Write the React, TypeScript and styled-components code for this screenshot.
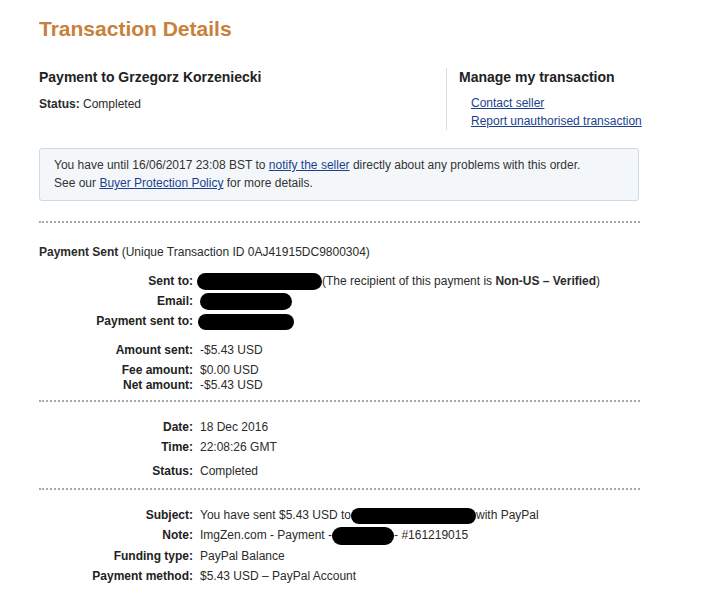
import React from "react";
import styled, { createGlobalStyle } from "styled-components";

const GlobalStyle = createGlobalStyle`
  html, body { margin: 0; padding: 0; background: #ffffff; }
  body {
    font-family: "Liberation Sans", Arial, sans-serif;
    font-size: 12px;
    color: #2b2b2b;
  }
`;

const Page = styled.div`
  width: 602px;
  padding: 17px 0 0 39px;
`;

const Title = styled.h1`
  margin: 0;
  font-size: 21px;
  line-height: 24px;
  font-weight: bold;
  color: #c8813d;
`;

const Header = styled.div`
  display: flex;
  margin-top: 27px;
`;

const Summary = styled.div`
  width: 407px;
  flex: none;
`;

const Manage = styled.div`
  flex: none;
  border-left: 1px solid #dcdcdc;
  padding-left: 12px;
  white-space: nowrap;
`;

const Heading = styled.h2`
  margin: 0;
  font-size: 14px;
  line-height: 18px;
  font-weight: bold;
  color: #222;
`;

const StatusLine = styled.div`
  margin-top: 9px;
  line-height: 18px;
`;

const LinkList = styled.div`
  display: flex;
  flex-direction: column;
  align-items: flex-start;
  padding: 8px 0 0 12px;
`;

const Link = styled.a`
  color: #1d3f8f;
  text-decoration: underline;
  line-height: 18px;
  cursor: pointer;
`;

const Notice = styled.div`
  margin-top: 18px;
  width: 570px;
  padding: 7px 14px 8px 14px;
  line-height: 18px;
  background: #f3f7fa;
  border: 1px solid #c9dbe7;
  border-radius: 3px;
  color: #333;
`;

const Divider = styled.div<{ $top: number }>`
  margin-top: ${(p) => p.$top}px;
  width: 601px;
  border-top: 2px dotted #a9a9a9;
`;

const Intro = styled.div<{ $top: number }>`
  margin-top: ${(p) => p.$top}px;
  line-height: 15px;
`;

const Row = styled.div<{ $top: number }>`
  display: grid;
  grid-template-columns: 154px 1fr;
  column-gap: 7px;
  margin-top: ${(p) => p.$top}px;
  height: 15px;
  line-height: 15px;
  white-space: nowrap;
`;

const Label = styled.div`
  text-align: right;
  font-weight: bold;
  color: #222;
`;

const Value = styled.div``;

const Redact = styled.span<{ $w: number; $h: number; $shift?: number }>`
  display: inline-block;
  width: ${(p) => p.$w}px;
  height: ${(p) => p.$h}px;
  margin: ${(p) => -p.$h / 2 + 4}px 0 ${(p) => -p.$h / 2 + 4}px ${(p) => p.$shift ?? 0}px;
  background: #000;
  border-radius: ${(p) => p.$h / 2}px;
  vertical-align: middle;
`;

type RowData = { label: string; value: React.ReactNode; top: number };

const sent: RowData[] = [
  {
    label: "Sent to:",
    top: 14,
    value: (
      <>
        <Redact $w={125} $h={17} $shift={-3} />
        (The recipient of this payment is <b>Non-US – Verified</b>)
      </>
    ),
  },
  { label: "Email:", top: 5, value: <Redact $w={92} $h={17} /> },
  { label: "Payment sent to:", top: 5, value: <Redact $w={96} $h={16} $shift={-2} /> },
  { label: "Amount sent:", top: 14, value: "-$5.43 USD" },
  { label: "Fee amount:", top: 5, value: "$0.00 USD" },
  { label: "Net amount:", top: 0, value: "-$5.43 USD" },
];

const timing: RowData[] = [
  { label: "Date:", top: 18, value: "18 Dec 2016" },
  { label: "Time:", top: 5, value: "22:08:26 GMT" },
  { label: "Status:", top: 9, value: "Completed" },
];

const extra: RowData[] = [
  {
    label: "Subject:",
    top: 18,
    value: (
      <>
        You have sent $5.43 USD to
        <Redact $w={125} $h={16} />
        with PayPal
      </>
    ),
  },
  {
    label: "Note:",
    top: 5,
    value: (
      <>
        ImgZen.com - Payment -
        <Redact $w={62} $h={18} />
        - #161219015
      </>
    ),
  },
  { label: "Funding type:", top: 6, value: "PayPal Balance" },
  { label: "Payment method:", top: 5, value: "$5.43 USD – PayPal Account" },
];

const Rows = ({ rows }: { rows: RowData[] }) => (
  <>
    {rows.map((r) => (
      <Row key={r.label} $top={r.top}>
        <Label>{r.label}</Label>
        <Value>{r.value}</Value>
      </Row>
    ))}
  </>
);

export default function App() {
  return (
    <>
      <GlobalStyle />
      <Page>
        <Title>Transaction Details</Title>
        <Header>
          <Summary>
            <Heading>Payment to Grzegorz Korzeniecki</Heading>
            <StatusLine>
              <b>Status:</b> Completed
            </StatusLine>
          </Summary>
          <Manage>
            <Heading>Manage my transaction</Heading>
            <LinkList>
              <Link>Contact seller</Link>
              <Link>Report unauthorised transaction</Link>
            </LinkList>
          </Manage>
        </Header>
        <Notice>
          You have until 16/06/2017 23:08 BST to <Link>notify the seller</Link> directly
          about any problems with this order.
          <br />
          See our <Link>Buyer Protection Policy</Link> for more details.
        </Notice>
        <Divider $top={20} />
        <Intro $top={22}>
          <b>Payment Sent</b> (Unique Transaction ID 0AJ41915DC9800304)
        </Intro>
        <Rows rows={sent} />
        <Divider $top={7} />
        <Rows rows={timing} />
        <Divider $top={9} />
        <Rows rows={extra} />
      </Page>
    </>
  );
}
